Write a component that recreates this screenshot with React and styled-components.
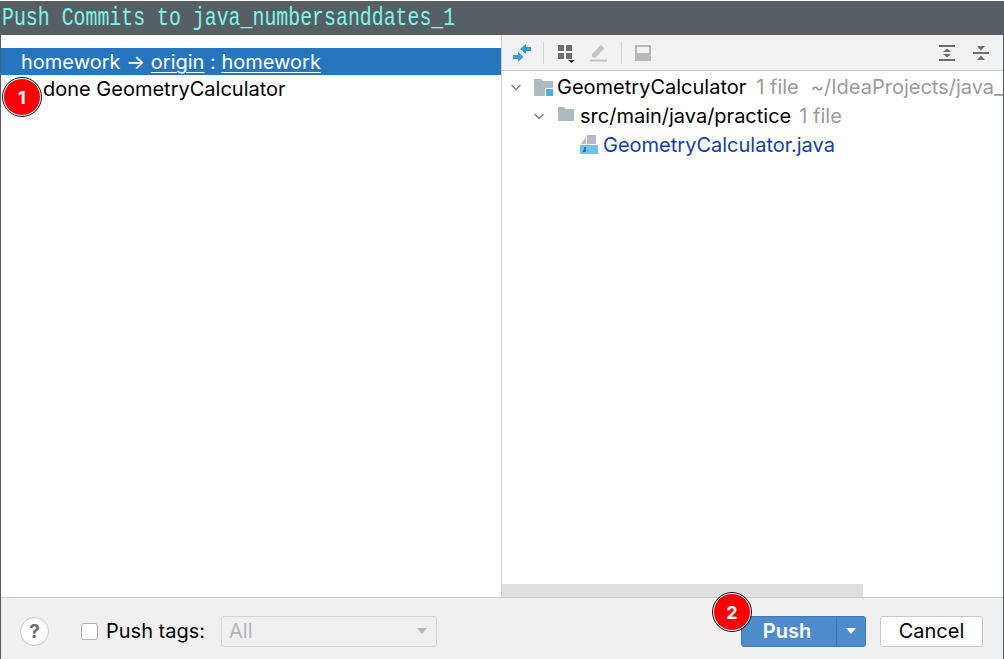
import React from "react";
import styled, { createGlobalStyle } from "styled-components";

const Global = createGlobalStyle`
  html, body {
    margin: 0;
    padding: 0;
    background: #fff;
  }
  #root {
    width: 1004px;
    height: 659px;
  }
`;

const Window = styled.div`
  position: relative;
  width: 1004px;
  height: 659px;
  padding-top: 1px;
  box-sizing: border-box;
  display: flex;
  flex-direction: column;
  overflow: hidden;
  font-family: Inter, "Liberation Sans", sans-serif;
  font-size: 20px;
  color: #000;
  background: #fff;
`;

const TitleBar = styled.div`
  height: 34px;
  flex: none;
  background: #555f64;
  padding-left: 2px;
`;

const TitleText = styled.span`
  display: inline-block;
  color: #7ff5e6;
  font-family: "Liberation Mono", monospace;
  font-size: 25px;
  line-height: 36px;
  white-space: pre;
  transform: scaleX(0.795);
  transform-origin: left center;
`;

const Dialog = styled.div`
  flex: 1;
  min-height: 0;
  display: flex;
  flex-direction: column;
  border-left: 1px solid #555f64;
  border-right: 1px solid #555f64;
`;

const Main = styled.div`
  flex: 1;
  min-height: 0;
  display: flex;
`;

const LeftPane = styled.div`
  width: 500px;
  flex: none;
  padding-top: 13px;
  border-right: 1px solid #d1d1d1;
`;

const BranchRow = styled.div`
  height: 27px;
  line-height: 28px;
  padding-left: 20px;
  background: #2675bf;
  color: #fff;
  white-space: pre;
`;

const BranchLink = styled.span`
  text-decoration: underline;
  text-underline-offset: 3px;
  text-decoration-thickness: 1px;
`;

const CommitRow = styled.div`
  height: 27px;
  line-height: 28px;
  padding-left: 42px;
`;

const RightPane = styled.div`
  flex: 1;
  min-width: 0;
  display: flex;
  flex-direction: column;
`;

const Toolbar = styled.div`
  height: 36px;
  flex: none;
  box-sizing: border-box;
  display: flex;
  align-items: center;
  padding: 0 12px 0 11px;
  background: #f2f2f2;
  border-bottom: 1px solid #c9c9c9;
`;

const ToolIcon = styled.svg`
  width: 20px;
  height: 20px;
  flex: none;
  display: block;
  margin-left: ${(p) => p.$gap || 0}px;
`;

const ToolSeparator = styled.div`
  width: 1px;
  height: 22px;
  margin-left: ${(p) => p.$gap}px;
  background: #d1d1d1;
  flex: none;
`;

const ToolSpacer = styled.div`
  flex: 1;
`;

const Tree = styled.div`
  flex: 1;
  min-height: 0;
  padding-top: 1px;
  overflow: hidden;
`;

const TreeRow = styled.div`
  height: 29px;
  display: flex;
  align-items: center;
  padding-left: ${(p) => p.$indent}px;
  white-space: nowrap;
`;

const Chevron = styled.svg`
  width: 12px;
  height: 12px;
  flex: none;
  margin-right: 10px;
`;

const NodeIcon = styled.svg`
  width: 22px;
  height: 22px;
  flex: none;
  margin-right: 3px;
`;

const FileName = styled.span`
  color: ${(p) => (p.$changed ? "#0f3fa8" : "#000")};
`;

const Hint = styled.span`
  color: #9a9a9a;
  margin-left: ${(p) => p.$gap}px;
`;

const HScroll = styled.div`
  height: 13px;
  width: 361px;
  flex: none;
  background: #e0e0e0;
`;

const Footer = styled.div`
  height: 62px;
  flex: none;
  box-sizing: border-box;
  display: flex;
  align-items: center;
  padding: 5px 20px 0 19px;
  background: #f0f0f0;
  border-top: 1px solid #c9c9c9;
`;

const HelpButton = styled.div`
  width: 29px;
  height: 29px;
  box-sizing: border-box;
  flex: none;
  border: 1px solid #c8c8c8;
  border-radius: 50%;
  background: #fff;
  color: #6e6e6e;
  font-weight: 700;
  font-size: 19px;
  line-height: 27px;
  text-align: center;
`;

const CheckBox = styled.div`
  width: 17px;
  height: 17px;
  box-sizing: border-box;
  flex: none;
  margin-left: 32px;
  border: 1px solid #b0b0b0;
  border-radius: 3px;
  background: #fff;
`;

const TagsLabel = styled.span`
  margin-left: 8px;
`;

const TagsSelect = styled.div`
  width: 216px;
  height: 31px;
  box-sizing: border-box;
  flex: none;
  margin-left: 16px;
  padding: 0 9px 0 7px;
  display: flex;
  align-items: center;
  justify-content: space-between;
  border: 1px solid #d6d6d6;
  border-radius: 3px;
  background: #f0f0f0;
  color: #b4b4b4;
`;

const Caret = styled.span`
  width: 0;
  height: 0;
  border-left: 5px solid transparent;
  border-right: 5px solid transparent;
  border-top: 6px solid ${(p) => p.$color};
`;

const FooterSpacer = styled.div`
  flex: 1;
`;

const PushButton = styled.div`
  width: 125px;
  height: 31px;
  box-sizing: border-box;
  flex: none;
  display: flex;
  border: 1px solid #3f7ab8;
  border-radius: 3px;
  background: #4e8bca;
  color: #fff;
  font-weight: 600;
`;

const PushLabel = styled.div`
  flex: 1;
  line-height: 29px;
  text-align: center;
  padding-right: 4px;
`;

const PushArrow = styled.div`
  width: 28px;
  display: flex;
  align-items: center;
  justify-content: center;
  border-left: 1px solid #3a73ad;
`;

const CancelButton = styled.div`
  width: 103px;
  height: 31px;
  box-sizing: border-box;
  flex: none;
  margin-left: 14px;
  border: 1px solid #c8c8c8;
  border-radius: 3px;
  background: #fff;
  line-height: 29px;
  text-align: center;
`;

const Badge = styled.div`
  position: absolute;
  left: ${(p) => p.$x}px;
  top: ${(p) => p.$y}px;
  width: 36px;
  height: 36px;
  border: 1px solid #fff;
  outline: 1px solid #111;
  border-radius: 50%;
  background: #fb0007;
  color: #fff;
  font-weight: 700;
  font-size: 18px;
  line-height: 38px;
  text-align: center;
`;

const App = () => {
  return (
    <>
      <Global />
      <Window>
        <TitleBar>
          <TitleText>Push Commits to java_numbersanddates_1</TitleText>
        </TitleBar>
        <Dialog>
          <Main>
            <LeftPane>
              <BranchRow>
                homework → <BranchLink>origin</BranchLink> : <BranchLink>homework</BranchLink>
              </BranchRow>
              <CommitRow>done GeometryCalculator</CommitRow>
            </LeftPane>
            <RightPane>
              <Toolbar>
                <ToolIcon viewBox="0 0 20 20">
                  <path d="M0 12h5V9l5.500 5L5 19v-3H0zM18 4h-5V1L7 6l6 5V8h5z" fill="#389fd6" />
                </ToolIcon>
                <ToolSeparator $gap={10} />
                <ToolIcon viewBox="0 0 20 20" $gap={13}>
                  <path d="M1 2h6v6H1zM9 2h6v6H9zM1 10h6v6H1zM9 10h6v6H9z" fill="#6e6e6e" />
                  <path d="M11 17h7l-3.500 3z" fill="#333" />
                </ToolIcon>
                <ToolIcon viewBox="0 0 20 20" $gap={12}>
                  <path d="M3 14.500V11L12 2l3.500 3.500-9 9z" fill="#c4c4c4" />
                  <path d="M1 16.500h17v2H1z" fill="#c4c4c4" />
                </ToolIcon>
                <ToolSeparator $gap={12} />
                <ToolIcon viewBox="0 0 20 20" $gap={11}>
                  <path d="M2 2h16v16H2zM4 4v6h12V4z" fill="#b8b8b8" fillRule="evenodd" />
                </ToolIcon>
                <ToolSpacer />
                <ToolIcon viewBox="0 0 20 20">
                  <path d="M2 2h16v2H2zM2 16h16v2H2z" fill="#6e6e6e" />
                  <path d="M10 5.500l4 3.500H6zM10 14.500l4-3.500H6z" fill="#6e6e6e" />
                </ToolIcon>
                <ToolIcon viewBox="0 0 20 20" $gap={14}>
                  <path d="M2 9h16v2H2z" fill="#6e6e6e" />
                  <path d="M10 7.500L14 3H6zM10 12.500l4 4.500H6z" fill="#6e6e6e" />
                </ToolIcon>
              </Toolbar>
              <Tree>
                <TreeRow $indent={8}>
                  <Chevron viewBox="0 0 12 12">
                    <path d="M1.500 4l4.500 4.500L10.500 4" fill="none" stroke="#7a7a7a" strokeWidth="1.300" />
                  </Chevron>
                  <NodeIcon viewBox="0 0 22 22">
                    <path d="M2 3h7l2 2h10v7h-8v8H2z" fill="#afb9c1" />
                    <path d="M14 13h7v7h-7z" fill="#40b6e0" />
                  </NodeIcon>
                  <span>GeometryCalculator</span>
                  <Hint $gap={10}>1 file</Hint>
                  <Hint $gap={12}>~/IdeaProjects/java_</Hint>
                </TreeRow>
                <TreeRow $indent={31}>
                  <Chevron viewBox="0 0 12 12">
                    <path d="M1.500 4l4.500 4.500L10.500 4" fill="none" stroke="#7a7a7a" strokeWidth="1.300" />
                  </Chevron>
                  <NodeIcon viewBox="0 0 22 22">
                    <path d="M3 2h6l2 2h8v12H3z" fill="#afb9c1" />
                  </NodeIcon>
                  <span>src/main/java/practice</span>
                  <Hint $gap={8}>1 file</Hint>
                </TreeRow>
                <TreeRow $indent={76}>
                  <NodeIcon viewBox="0 0 22 22">
                    <path d="M9 1h9v9H9zM8 3L3 10h5z" fill="#b4bcc2" />
                    <path d="M2 11h18v9H2z" fill="#6fc3e8" />
                    <path d="M7 13v4H5" fill="none" stroke="#34495e" strokeWidth="1.300" />
                  </NodeIcon>
                  <FileName $changed>GeometryCalculator.java</FileName>
                </TreeRow>
              </Tree>
              <HScroll />
            </RightPane>
          </Main>
          <Footer>
            <HelpButton>?</HelpButton>
            <CheckBox />
            <TagsLabel>Push tags:</TagsLabel>
            <TagsSelect>
              All
              <Caret $color="#b4b4b4" />
            </TagsSelect>
            <FooterSpacer />
            <PushButton>
              <PushLabel>Push</PushLabel>
              <PushArrow>
                <Caret $color="#fff" />
              </PushArrow>
            </PushButton>
            <CancelButton>Cancel</CancelButton>
          </Footer>
        </Dialog>
        <Badge $x={3} $y={78}>1</Badge>
        <Badge $x={713} $y={593}>2</Badge>
      </Window>
    </>
  );
};

export default App;
